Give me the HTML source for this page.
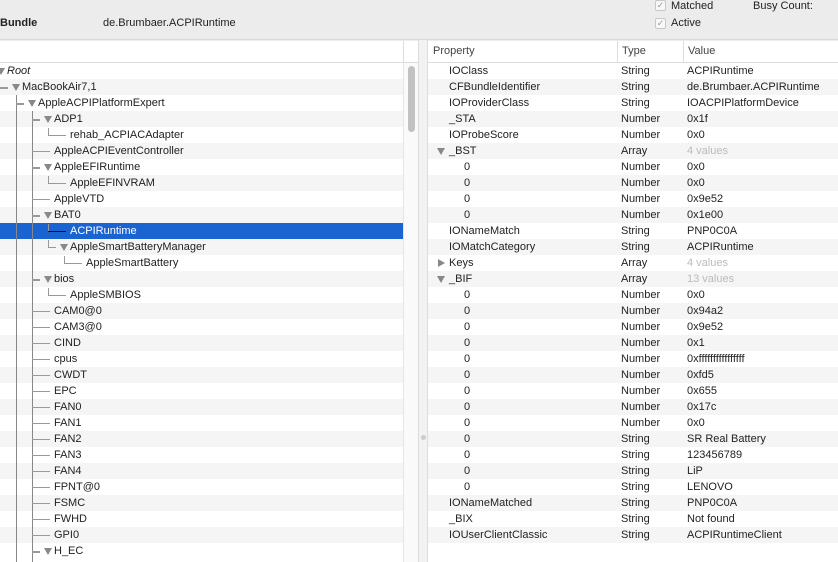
<!DOCTYPE html>
<html><head><meta charset="utf-8"><style>
*{margin:0;padding:0;box-sizing:border-box}
body{width:838px;height:562px;overflow:hidden;background:#ececec;font-family:"Liberation Sans",sans-serif;font-size:11px;color:#222;position:relative}
.a{position:absolute;white-space:nowrap}
.row{position:absolute;height:16px;line-height:16px}
.tri{position:absolute;width:0;height:0;border-left:4px solid transparent;border-right:4px solid transparent;border-top:7px solid #888}
.tr{position:absolute;width:0;height:0;border-top:4px solid transparent;border-bottom:4px solid transparent;border-left:7px solid #888}
</style></head><body>
<div class="a" style="left:0;top:17px;font-weight:bold;font-size:11px">Bundle</div>
<div class="a" style="left:103px;top:17px">de.Brumbaer.ACPIRuntime</div>
<div class="a" style="left:655px;top:0px;width:11px;height:11px;border:1px solid #c8c8c8;background:#f8f8f8;border-radius:2px;color:#999;font-size:9px;line-height:9px;text-align:center">✓</div>
<div class="a" style="left:671px;top:0px">Matched</div>
<div class="a" style="left:655px;top:18px;width:11px;height:11px;border:1px solid #c8c8c8;background:#f8f8f8;border-radius:2px;color:#999;font-size:9px;line-height:9px;text-align:center">✓</div>
<div class="a" style="left:671px;top:17px">Active</div>
<div class="a" style="left:753px;top:0px">Busy Count:</div>
<div class="a" style="left:0;top:39px;width:838px;height:1px;background:#d8d8d8"></div>
<div id="L" class="a" style="left:0;top:41px;width:418px;height:521px;background:#fff;overflow:hidden"></div>
<div class="a" style="left:418px;top:40px;width:10px;height:522px;background:#f2f2f2;border-left:1px solid #ddd;border-right:1px solid #ddd"></div>
<div class="a" style="left:421px;top:435px;width:5px;height:5px;border-radius:3px;background:#ccc"></div>
<div id="R" class="a" style="left:428px;top:41px;width:410px;height:521px;background:#fff;overflow:hidden"></div>
<script>
var L=document.getElementById('L'),R=document.getElementById('R'),h='';
h+='<div class="row" style="left:0;top:0;width:418px;height:22px;border-bottom:1px solid #ddd"></div>';
h+='<div class="a" style="left:403px;top:0;width:1px;height:22px;background:#ddd"></div>';
var t=[[0,'Root',1,0],[1,'MacBookAir7,1',1],[2,'AppleACPIPlatformExpert',1],[3,'ADP1',1],[4,'rehab_ACPIACAdapter',0],[3,'AppleACPIEventController',0],[3,'AppleEFIRuntime',1],[4,'AppleEFINVRAM',0],[3,'AppleVTD',0],[3,'BAT0',1],[4,'ACPIRuntime',0],[4,'AppleSmartBatteryManager',1],[5,'AppleSmartBattery',0],[3,'bios',1],[4,'AppleSMBIOS',0]];
['CAM0@0','CAM3@0','CIND','cpus','CWDT','EPC','FAN0','FAN1','FAN2','FAN3','FAN4','FPNT@0','FSMC','FWHD','GPI0'].forEach(function(n){t.push([3,n,0])});t.push([3,'H_EC',1]);
for(var i=0;i<31;i++){var y=22+i*16;h+='<div class="row" style="left:0;top:'+y+'px;width:403px;background:'+(i==10?'#1a64d2':(i%2?'#f5f5f5':'#fff'))+'"></div>';}
h+='<div class="a" style="left:16px;top:54px;width:1px;height:480px;background:#888"></div>';
h+='<div class="a" style="left:32px;top:70px;width:1px;height:460px;background:#888"></div>';
t.forEach(function(r,i){var y=22+i*16,lv=r[0],sel=i==10;var tx=lv==0?7:(lv==1?22:(lv==2?38:(lv==3?54:(lv==4?70:86))));
if(lv>0){var lx=lv==1?0:(lv==2?16:(lv==3?32:(lv==4?48:64)));if(lv>=4)h+='<div class="a" style="left:'+lx+'px;top:'+(y+1)+'px;width:1px;height:7px;background:#999"></div>';h+='<div class="a" style="left:'+lx+'px;top:'+(y+8)+'px;width:'+(r[2]?8:(tx-lx-4))+'px;height:'+(lv<=3&&r[2]?2:1)+'px;background:'+(sel?'#111':'#999')+'"></div>';}
if(r[2])h+='<div class="tri" style="left:'+(tx-10)+'px;top:'+(y+5)+'px"></div>';
h+='<div class="row" style="left:'+tx+'px;top:'+y+'px;color:'+(sel?'#fff':'#222')+(lv==0?';font-style:italic':'')+'">'+r[1]+'</div>';});
h+='<div class="a" style="left:403px;top:22px;width:15px;height:500px;background:#fafafa;border-left:1px solid #e5e5e5"></div>';
h+='<div class="a" style="left:408px;top:25px;width:7px;height:66px;border-radius:4px;background:#c2c2c2"></div>';
L.innerHTML=h;
h='<div class="row" style="left:0;top:0;width:410px;height:22px;border-bottom:1px solid #ddd"></div>';
h+='<div class="row" style="left:5px;top:2px;color:#444">Property</div><div class="row" style="left:194px;top:2px;color:#444">Type</div><div class="row" style="left:260px;top:2px;color:#444">Value</div>';
h+='<div class="a" style="left:189px;top:0;width:1px;height:22px;background:#ddd"></div><div class="a" style="left:255px;top:0;width:1px;height:22px;background:#ddd"></div>';
var p=[['IOClass','String','ACPIRuntime',0],['CFBundleIdentifier','String','de.Brumbaer.ACPIRuntime',0],['IOProviderClass','String','IOACPIPlatformDevice',0],['_STA','Number','0x1f',0],['IOProbeScore','Number','0x0',0],['_BST','Array','4 values',1],['0','Number','0x0',2],['0','Number','0x0',2],['0','Number','0x9e52',2],['0','Number','0x1e00',2],['IONameMatch','String','PNP0C0A',0],['IOMatchCategory','String','ACPIRuntime',0],['Keys','Array','4 values',3],['_BIF','Array','13 values',1],['0','Number','0x0',2],['0','Number','0x94a2',2],['0','Number','0x9e52',2],['0','Number','0x1',2],['0','Number','0xffffffffffffffff',2],['0','Number','0xfd5',2],['0','Number','0x655',2],['0','Number','0x17c',2],['0','Number','0x0',2],['0','String','SR Real Battery',2],['0','String','123456789',2],['0','String','LiP',2],['0','String','LENOVO',2],['IONameMatched','String','PNP0C0A',0],['_BIX','String','Not found',0],['IOUserClientClassic','String','ACPIRuntimeClient',0]];
for(var i=0;i<31;i++){h+='<div class="row" style="left:0;top:'+(22+i*16)+'px;width:410px;background:'+(i%2?'#f5f5f5':'#fff')+'"></div>';}
p.forEach(function(r,i){var y=22+i*16;h+='<div class="row" style="left:'+(r[3]==2?36:21)+'px;top:'+y+'px">'+r[0]+'</div>';
if(r[3]==1)h+='<div class="tri" style="left:9px;top:'+(y+5)+'px"></div>';if(r[3]==3)h+='<div class="tr" style="left:10px;top:'+(y+4)+'px"></div>';
h+='<div class="row" style="left:193px;top:'+y+'px">'+r[1]+'</div><div class="row" style="left:259px;top:'+y+'px;color:'+(r[3]==1||r[3]==3?'#bbb':'#222')+'">'+r[2]+'</div>';});
R.innerHTML=h;
</script>
</body></html>
